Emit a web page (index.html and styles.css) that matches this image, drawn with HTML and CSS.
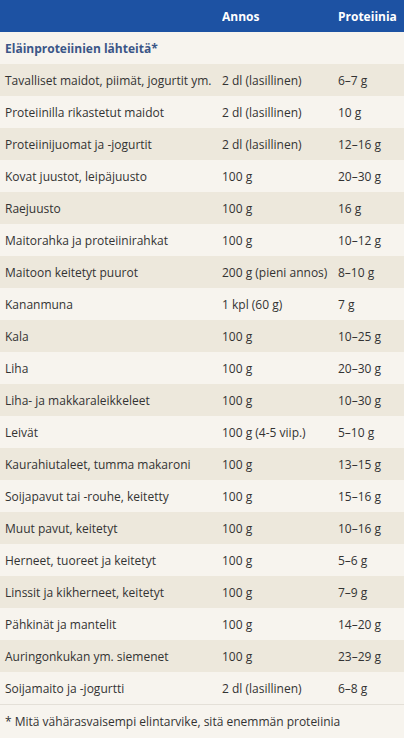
FILE: index.html
```html
<!DOCTYPE html>
<html lang="fi">
<head>
<meta charset="utf-8">
<link rel="stylesheet" href="styles.css">
</head>
<body>
<table class="ptable">
  <thead>
    <tr class="head">
      <th class="c1"></th>
      <th class="c2">Annos</th>
      <th class="c3">Proteiinia</th>
    </tr>
  </thead>
  <tbody>
    <tr class="cat light"><td colspan="3">Eläinproteiinien lähteitä*</td></tr>
    <tr class="dark"><td>Tavalliset maidot, piimät, jogurtit ym.</td><td>2 dl (lasillinen)</td><td>6–7 g</td></tr>
    <tr class="light"><td>Proteiinilla rikastetut maidot</td><td>2 dl (lasillinen)</td><td>10 g</td></tr>
    <tr class="dark"><td>Proteiinijuomat ja -jogurtit</td><td>2 dl (lasillinen)</td><td>12–16 g</td></tr>
    <tr class="light"><td>Kovat juustot, leipäjuusto</td><td>100 g</td><td>20–30 g</td></tr>
    <tr class="dark"><td>Raejuusto</td><td>100 g</td><td>16 g</td></tr>
    <tr class="light"><td>Maitorahka ja proteiinirahkat</td><td>100 g</td><td>10–12 g</td></tr>
    <tr class="dark"><td>Maitoon keitetyt puurot</td><td>200 g (pieni annos)</td><td>8–10 g</td></tr>
    <tr class="light"><td>Kananmuna</td><td>1 kpl (60 g)</td><td>7 g</td></tr>
    <tr class="dark"><td>Kala</td><td>100 g</td><td>10–25 g</td></tr>
    <tr class="light"><td>Liha</td><td>100 g</td><td>20–30 g</td></tr>
    <tr class="dark"><td>Liha- ja makkaraleikkeleet</td><td>100 g</td><td>10–30 g</td></tr>
    <tr class="light"><td>Leivät</td><td>100 g (4-5 viip.)</td><td>5–10 g</td></tr>
    <tr class="dark"><td>Kaurahiutaleet, tumma makaroni</td><td>100 g</td><td>13–15 g</td></tr>
    <tr class="light"><td>Soijapavut tai -rouhe, keitetty</td><td>100 g</td><td>15–16 g</td></tr>
    <tr class="dark"><td>Muut pavut, keitetyt</td><td>100 g</td><td>10–16 g</td></tr>
    <tr class="light"><td>Herneet, tuoreet ja keitetyt</td><td>100 g</td><td>5–6 g</td></tr>
    <tr class="dark"><td>Linssit ja kikherneet, keitetyt</td><td>100 g</td><td>7–9 g</td></tr>
    <tr class="light"><td>Pähkinät ja mantelit</td><td>100 g</td><td>14–20 g</td></tr>
    <tr class="dark"><td>Auringonkukan ym. siemenet</td><td>100 g</td><td>23–29 g</td></tr>
    <tr class="light"><td>Soijamaito ja -jogurtti</td><td>2 dl (lasillinen)</td><td>6–8 g</td></tr>
  </tbody>
  <tfoot>
    <tr class="foot"><td colspan="3">* Mitä vähärasvaisempi elintarvike, sitä enemmän proteiinia</td></tr>
  </tfoot>
</table>
</body>
</html>
```

FILE: styles.css
```css
html, body {
  margin: 0;
  padding: 0;
  background: #f7f4ee;
}
body {
  font-family: "Open Sans", "Noto Sans", sans-serif;
  font-size: 12px;
  color: #333333;
}
.ptable {
  width: 404px;
  border-collapse: collapse;
  table-layout: fixed;
}
.ptable th, .ptable td {
  padding: 0 0 0 5px;
  height: 32px;
  text-align: left;
  vertical-align: middle;
  white-space: nowrap;
  overflow: hidden;
}
.c1 { width: 217px; }
.c2 { width: 116px; }
.c3 { width: 71px; }
.ptable td:nth-child(2), .ptable th.c2 { padding-left: 0; }
.ptable td:nth-child(3), .ptable th.c3 { padding-left: 0; }
.head {
  background: #1d52a3;
}
.head th {
  color: #ffffff;
  font-weight: 700;
  font-size: 12px;
  height: 32px;
}
.light { background: #f7f4ee; }
.dark { background: #ede8dc; }
.cat td {
  color: #3b5687;
  font-weight: 700;
}
.foot td {
  border-top: 1px solid #e4e0d8;
  background: #f7f4ee;
  height: 33px;
}
```
